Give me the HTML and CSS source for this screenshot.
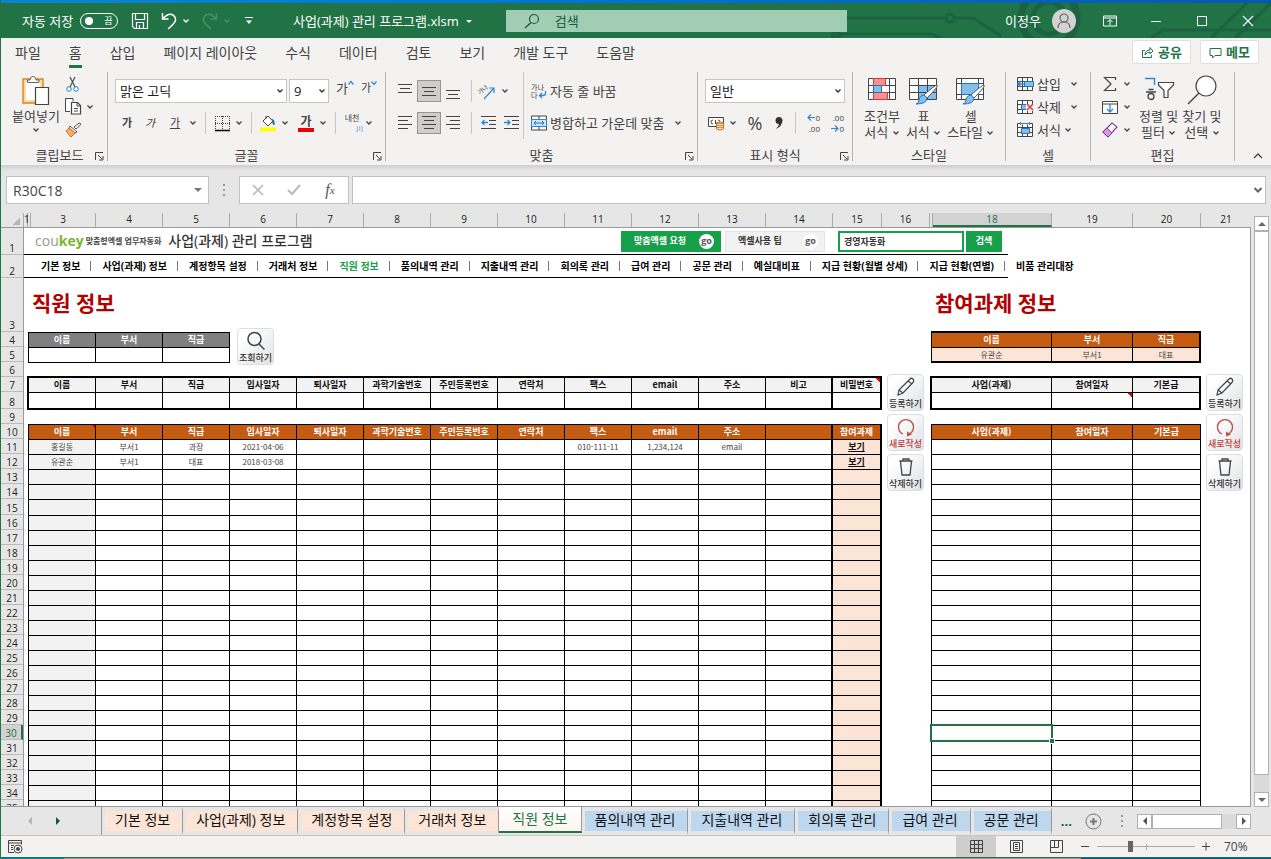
FILE: index.html
```html
<!DOCTYPE html>
<html lang="ko">
<head>
  <meta charset="UTF-8" />
  <meta name="viewport" content="width=device-width, initial-scale=1.0"/>
  <title>사업(과제) 관리 프로그램.xlsm</title>
  <link rel="stylesheet" href="styles.css">
</head>
<body>
  <!-- Shared icons -->
  <svg class="sprite" aria-hidden="true">
    <symbol id="chev" viewBox="0 0 8 8"><path d="M1.500 2.500 4 5l2.500-2.500" fill="none" stroke="currentColor" stroke-width="1.300"/></symbol>
    <symbol id="launcher" viewBox="0 0 9 9"><path d="M.5 8V.5H8M3 3l4 4M8 4v4H4" fill="none" stroke="#444"/></symbol>
    <symbol id="pencil" viewBox="0 0 22 22"><path d="M4 14 15 3q1.500-1.500 3 0t0 3.500L8 17l-5 2zM4 14l4 3M13 5l4 3" fill="none" stroke="#444" stroke-width="1.200"/></symbol>
    <symbol id="reload" viewBox="0 0 22 22"><path d="M8 18A7.500 7.500 0 1 1 14 18" fill="none" stroke="#c0504d" stroke-width="1.300"/><path d="M12 15.500v5l5-2z" fill="#c0504d"/></symbol>
    <symbol id="trash" viewBox="0 0 22 22"><path d="M4.500 5h13M8 5V3h6v2M5.500 5.500 7 19h8l1.500-13.500" fill="none" stroke="#444" stroke-width="1.300"/></symbol>
    <symbol id="brush" viewBox="0 0 24 22"><path d="M22 1q2 1-10 13l-3-3Q20 1 22 1z" fill="#fff" stroke="#555"/><path d="M9 11l3 3q0 6-11 6 3-1 3-4 0-4 5-5z" fill="#83beec" stroke="#2472b8"/></symbol>
    <symbol id="minitable" viewBox="0 0 17 16"><path d="M.5 1.500h15v13H.5zM.5 5.500h15M.5 10.500h15M5.500 1.500v13M10.500 1.500v13" fill="#fff" stroke="#444"/></symbol>
  </svg>

  <div class="window">
    <div class="desktop-strip"></div>

    <header class="titlebar">
      <svg class="circuit" viewBox="0 0 440 35" aria-hidden="true">
        <g fill="none" stroke="#1c6240" stroke-width="3">
          <path d="M0 15h114M124 15h18l28 18M0 35 10 31h90l10 4M320 35l12-8h108M380 35l36-35M404 35l36-35"/>
          <circle cx="119" cy="15" r="4"/><circle cx="218" cy="15" r="28" stroke-width="7"/><circle cx="218" cy="15" r="16" stroke-width="5"/><circle cx="5" cy="33" r="4"/>
        </g>
      </svg>
      <div class="quick">
        <span>자동 저장</span>
        <button class="toggle" aria-label="자동 저장"><i></i><span>끔</span></button>
        <button aria-label="저장"><svg width="18" height="18" viewBox="0 0 18 18"><path d="M1.500 1.500h15v15h-13l-2-2zM4.500 1.500v6h9v-6M5.500 16.500v-6h7v6M8.500 13v3" fill="none" stroke="#fff" stroke-width="1.200"/></svg></button>
        <button class="undo" aria-label="실행 취소"><svg width="16" height="18" viewBox="0 0 16 18"><path d="M1.500 1v6h6M1.500 7Q7 1 11 2.500q4 2 3.500 6Q14 11 7 17" fill="none" stroke="#fff" stroke-width="1.400"/></svg><svg width="8" height="8"><use href="#chev"/></svg></button>
        <button class="undo dim" aria-label="다시 실행"><svg width="16" height="18" viewBox="0 0 16 18"><path d="M14.500 1v6h-6M14.500 7Q9 1 5 2.500q-4 2-3.500 6Q2 11 9 17" fill="none" stroke="#4a8f6a" stroke-width="1.400"/></svg><svg width="8" height="8"><use href="#chev"/></svg></button>
        <button class="more" aria-label="빠른 실행 도구 모음"><svg width="8" height="8" viewBox="0 0 8 8"><path d="M0 .5h8" stroke="#fff"/><path d="M1 3.500h6L4 7z" fill="#fff"/></svg></button>
      </div>
      <button class="filename">사업(과제) 관리 프로그램.xlsm <svg width="8" height="8" viewBox="0 0 8 8"><path d="M1 3h6L4 6z" fill="#fff"/></svg></button>
      <label class="search">
        <svg width="16" height="16" viewBox="0 0 16 16"><circle cx="10" cy="6" r="4.500" fill="none" stroke="#185c37" stroke-width="1.200"/><path d="M7 9.500 1 15" stroke="#185c37" stroke-width="1.300"/></svg>
        <input type="search" placeholder="검색" aria-label="검색">
      </label>
      <div class="account">
        <span>이정우</span>
        <svg width="24" height="24" viewBox="0 0 24 24"><circle cx="12" cy="12" r="12" fill="#d2d2d2"/><circle cx="12" cy="9" r="4" fill="none" stroke="#666" stroke-width="1.200"/><path d="M6 19q0-6 6-6t6 6" fill="none" stroke="#666" stroke-width="1.200"/></svg>
      </div>
      <div class="controls">
        <button aria-label="리본 메뉴 표시 옵션"><svg width="14" height="12" viewBox="0 0 14 12"><path d="M.5 1h13v10H.5zM.5 3h13M7 10V5M4.500 7 7 4.500 9.500 7" fill="none" stroke="#fff"/></svg></button>
        <button aria-label="최소화"><svg width="12" height="12" viewBox="0 0 12 12"><path d="M1 6.500h10" stroke="#fff"/></svg></button>
        <button aria-label="최대화"><svg width="12" height="12" viewBox="0 0 12 12"><path d="M1.500 1.500h9v9h-9z" fill="none" stroke="#fff"/></svg></button>
        <button aria-label="닫기"><svg width="12" height="12" viewBox="0 0 12 12"><path d="m1 1 10 10M11 1 1 11" stroke="#fff" stroke-width="1.100"/></svg></button>
      </div>
    </header>

    <nav class="ribbon-tabs">
      <a href="#">파일</a>
      <a href="#" class="on">홈</a>
      <a href="#">삽입</a>
      <a href="#">페이지 레이아웃</a>
      <a href="#">수식</a>
      <a href="#">데이터</a>
      <a href="#">검토</a>
      <a href="#">보기</a>
      <a href="#">개발 도구</a>
      <a href="#">도움말</a>
      <div class="share">
        <button><svg width="13" height="13" viewBox="0 0 13 13"><path d="M4 4.500H1.500v7h9V9M4 9q0-5 5-5V1.500L12 5 9 8V6Q6 6 4 9z" fill="none" stroke="#217346"/></svg>공유</button>
        <button><svg width="13" height="13" viewBox="0 0 13 13"><path d="M1 2.500h11v7H6l-2.500 2.500V9.500H1z" fill="none" stroke="#217346"/></svg>메모</button>
      </div>
    </nav>

    <div class="ribbon">
      <section class="group clipboard">
        <div class="group-body">
          <button class="big">
            <svg width="30" height="31" viewBox="0 0 30 31"><path d="M2 4h20v24H2z" fill="#fbdca4" stroke="#d98419" stroke-width="1.400"/><path d="M5 7h14v18H5z" fill="#fff"/><path d="M6.500 7.500V5H9q0-3.500 3-3.500T15 5h3v2.500z" fill="#fff" stroke="#666"/><path d="M14.500 12.500h13v17h-13z" fill="#fff" stroke="#444" stroke-width="1.200"/></svg>
            <span>붙여넣기</span>
            <svg class="drop" width="8" height="8"><use href="#chev"/></svg>
          </button>
          <div class="stack">
            <button aria-label="잘라내기"><svg width="16" height="16" viewBox="0 0 16 16"><path d="m5 1 5 10M10 1 5 11" stroke="#555" stroke-width="1.300"/><circle cx="4" cy="13" r="2.300" fill="none" stroke="#2b88d8"/><circle cx="11" cy="13" r="2.300" fill="none" stroke="#2b88d8"/></svg></button>
            <button aria-label="복사"><svg width="17" height="17" viewBox="0 0 17 17"><path d="M5 13.500H.5v-13H8v3" fill="#fff" stroke="#444"/><path d="M6.500 4.500h6l3 3v8.500h-9z" fill="#fff" stroke="#444" stroke-width="1.200"/><path d="M12 4.500V8h3.500M9 10.500h4M9 13h4" fill="none" stroke="#444"/></svg><svg width="8" height="8"><use href="#chev"/></svg></button>
            <button aria-label="서식 복사"><svg width="17" height="16" viewBox="0 0 17 16"><path d="m9 5 5-4q2 0 1.500 2L11 7z" fill="#fff" stroke="#555"/><path d="m5 4 7 6-2 1-6-5z" fill="#fff" stroke="#555"/><path d="m4 6 6 5-4 4-5-6z" fill="#f5b169" stroke="#d8690e"/></svg></button>
          </div>
        </div>
        <footer>클립보드<svg width="9" height="9"><use href="#launcher"/></svg></footer>
      </section>

      <section class="group font">
        <div class="group-body rows">
          <div class="tools">
            <select class="font-name" aria-label="글꼴"><option>맑은 고딕</option></select>
            <select class="font-size" aria-label="글꼴 크기"><option>9</option></select>
            <button class="icon grow">가<svg width="6" height="4" viewBox="0 0 6 4"><path d="m.5 3.500 2.500-3 2.500 3" fill="none" stroke="#2b88d8" stroke-width="1.200"/></svg></button>
            <button class="icon grow less">가<svg width="6" height="4" viewBox="0 0 6 4"><path d="m.5.500 2.500 3 2.500-3" fill="none" stroke="#2b88d8" stroke-width="1.200"/></svg></button>
          </div>
          <div class="tools small">
            <button class="icon"><b>가</b></button>
            <button class="icon"><em>가</em></button>
            <button class="icon"><u>가</u></button>
            <button class="arrow" aria-label="밑줄"><svg width="8" height="8"><use href="#chev"/></svg></button>
            <i class="sep"></i>
            <button class="icon mid" aria-label="테두리"><svg width="15" height="15" viewBox="0 0 15 15"><path d="M0 .5h15M0 7.500h15M.5 0v15M7.500 0v15M14.500 0v15" stroke="#444" stroke-dasharray="1 1"/><path d="M0 14.500h15" stroke="#000" stroke-width="1.500"/></svg></button>
            <button class="arrow" aria-label="테두리 목록"><svg width="8" height="8"><use href="#chev"/></svg></button>
            <i class="sep"></i>
            <button class="icon mid" aria-label="채우기 색"><svg width="17" height="17" viewBox="0 0 17 17"><path d="m3 6 5-5 5 5-5 5zM6 4V1" fill="#fff" stroke="#444"/><path d="M12 4q3 1 2 6-2-2-2-6z" fill="#2472b8" stroke="#2472b8"/><path d="M0 12.500h16v4H0z" fill="#ff0"/></svg></button>
            <button class="arrow" aria-label="채우기 목록"><svg width="8" height="8"><use href="#chev"/></svg></button>
            <button class="icon mid color"><b>가</b></button>
            <button class="arrow" aria-label="글꼴 색 목록"><svg width="8" height="8"><use href="#chev"/></svg></button>
            <i class="sep"></i>
            <button class="icon mid ruby">내천<span>川</span></button>
            <button class="arrow" aria-label="윗주"><svg width="8" height="8"><use href="#chev"/></svg></button>
          </div>
        </div>
        <footer>글꼴<svg width="9" height="9"><use href="#launcher"/></svg></footer>
      </section>

      <section class="group align">
        <div class="group-body">
          <div class="rows align-left">
            <div class="tools">
              <button class="icon" aria-label="위쪽"><svg width="14" height="16" viewBox="0 0 14 16"><path d="M0 1.500h14M2 5.500h10M0 9.500h14" stroke="#444"/></svg></button>
              <button class="icon on" aria-label="가운데"><svg width="14" height="16" viewBox="0 0 14 16"><path d="M0 4.500h14M2 8.500h10M0 12.500h14" stroke="#444"/></svg></button>
              <button class="icon" aria-label="아래쪽"><svg width="14" height="16" viewBox="0 0 14 16"><path d="M0 7.500h14M2 11.500h10M0 15.500h14" stroke="#444"/></svg></button>
              <i class="sep"></i>
              <button class="icon mid" aria-label="방향"><svg width="20" height="20" viewBox="0 0 20 20"><text x="1" y="12" font-size="6" transform="rotate(-38 4 12)" fill="#444">가나</text><path d="M6 18 16 7M11 7h5v5" fill="none" stroke="#2b88d8" stroke-width="1.200"/></svg></button>
              <button class="arrow" aria-label="방향 목록"><svg width="8" height="8"><use href="#chev"/></svg></button>
            </div>
            <div class="tools">
              <button class="icon" aria-label="왼쪽 맞춤"><svg width="14" height="14" viewBox="0 0 14 14"><path d="M0 .5h14M0 4.500h10M0 8.500h14M0 12.500h10" stroke="#444"/></svg></button>
              <button class="icon on" aria-label="가운데 맞춤"><svg width="14" height="14" viewBox="0 0 14 14"><path d="M0 .5h14M2 4.500h10M0 8.500h14M2 12.500h10" stroke="#444"/></svg></button>
              <button class="icon" aria-label="오른쪽 맞춤"><svg width="14" height="14" viewBox="0 0 14 14"><path d="M0 .5h14M4 4.500h10M0 8.500h14M4 12.500h10" stroke="#444"/></svg></button>
              <i class="sep"></i>
              <button class="icon mid" aria-label="내어쓰기"><svg width="15" height="14" viewBox="0 0 15 14"><path d="M0 .5h15M8 4.500h7M8 8.500h7M0 12.500h15" stroke="#444"/><path d="M7 6.500H1M3.500 4 1 6.500 3.500 9" fill="none" stroke="#2b88d8" stroke-width="1.300"/></svg></button>
              <button class="icon" aria-label="들여쓰기"><svg width="15" height="14" viewBox="0 0 15 14"><path d="M0 .5h15M8 4.500h7M8 8.500h7M0 12.500h15" stroke="#444"/><path d="M0 6.500h6M3.500 4 6 6.500 3.500 9" fill="none" stroke="#2b88d8" stroke-width="1.300"/></svg></button>
            </div>
          </div>
          <div class="rows align-right">
            <div class="tools">
              <button class="text"><svg width="16" height="16" viewBox="0 0 16 16"><text x="0" y="7" font-size="7" fill="#444">가나</text><text x="0" y="15" font-size="7" fill="#444">다</text><path d="M14.500 8v2.500q0 2-2.500 2H8.500M11 10l-2.500 2.500L11 15" fill="none" stroke="#2b88d8" stroke-width="1.300"/></svg>자동 줄 바꿈</button>
            </div>
            <div class="tools">
              <button class="text"><svg width="16" height="16" viewBox="0 0 16 16"><path d="M.5 1h15v14H.5zM8 1v14" fill="#fff" stroke="#444"/><path d="M.5 4.500h15v7H.5z" fill="#cfe6f8" stroke="#2b88d8"/><path d="M3 8h10M5 6 3 8l2 2M11 6l2 2-2 2" fill="none" stroke="#2472b8"/></svg>병합하고 가운데 맞춤</button>
              <button class="arrow last" aria-label="병합 목록"><svg width="8" height="8"><use href="#chev"/></svg></button>
            </div>
          </div>
        </div>
        <footer>맞춤<svg width="9" height="9"><use href="#launcher"/></svg></footer>
      </section>

      <section class="group number">
        <div class="group-body rows">
          <div class="tools"><select aria-label="표시 형식"><option>일반</option></select></div>
          <div class="tools">
            <button class="icon mid" aria-label="회계 표시 형식"><svg width="17" height="16" viewBox="0 0 17 16"><path d="M.5 2.500h15v9H.5z" fill="#fff" stroke="#444"/><path d="M5 5q-2 0-2 2t2 2M7.500 5v4M10 5q2 0 2 2" fill="none" stroke="#444"/><path d="M8.500 8q3.500-2 7 0v6q-3.500 2-7 0z" fill="#fff" stroke="#d8690e"/><path d="M8.500 8q3.500 2 7 0M8.500 10q3.500 2 7 0M8.500 12q3.500 2 7 0" fill="none" stroke="#d8690e"/></svg></button>
            <button class="arrow" aria-label="회계 목록"><svg width="8" height="8"><use href="#chev"/></svg></button>
            <button class="icon percent">%</button>
            <button class="icon" aria-label="쉼표 스타일"><svg width="10" height="14" viewBox="0 0 10 14"><path d="M5 1a3.500 3.500 0 0 1 3.500 4Q8 10 2 13q3-3 3-5a3.500 3.500 0 0 1 0-7z" fill="#333"/></svg></button>
            <i class="sep"></i>
            <button class="icon dec"><span><svg width="8" height="7" viewBox="0 0 8 7"><path d="M8 3.500H1M4 .5l-3 3 3 3" fill="none" stroke="#2b88d8" stroke-width="1.200"/></svg>0</span><span>.00</span></button>
            <button class="icon dec"><span>.00</span><span><svg width="8" height="7" viewBox="0 0 8 7"><path d="M0 3.500h7M4 .5l3 3-3 3" fill="none" stroke="#2b88d8" stroke-width="1.200"/></svg>0</span></button>
          </div>
        </div>
        <footer>표시 형식<svg width="9" height="9"><use href="#launcher"/></svg></footer>
      </section>

      <section class="group styles">
        <div class="group-body">
          <button class="big">
            <svg width="30" height="31" viewBox="0 0 30 31"><path d="M1.500 3.500h27v21h-27zM6.500 3.500v21M14.500 3.500v21M22.500 3.500v21M1.500 10.500h27M1.500 17.500h27" fill="#fff" stroke="#444"/><path d="M6.500 3.500h12v7h-12zM6.500 17.500h14v7h-14z" fill="#ff8f8f" stroke="#e0373f"/><path d="M6.500 10.500h8v7h-8z" fill="#83beec" stroke="#2472b8"/></svg>
            <span>조건부<br>서식 <svg width="8" height="8"><use href="#chev"/></svg></span>
          </button>
          <button class="big">
            <svg width="31" height="31" viewBox="0 0 31 31"><path d="M1.500 3.500h27v21h-27z" fill="#fff"/><path d="M10.500 10.500h18v14h-18z" fill="#83beec"/><path d="M1.500 3.500h27v21h-27zM10.500 3.500v21M19.500 3.500v21M1.500 10.500h27M1.500 17.500h27" fill="none" stroke="#444"/><use href="#brush" x="7" y="9" width="24" height="22"/></svg>
            <span>표<br>서식 <svg width="8" height="8"><use href="#chev"/></svg></span>
          </button>
          <button class="big">
            <svg width="31" height="31" viewBox="0 0 31 31"><path d="M1.500 3.500h27v21h-27zM6.500 3.500v21M23.500 3.500v21M1.500 8.500h27M1.500 19.500h27" fill="#fff" stroke="#444"/><path d="M6.500 8.500h17v11h-17z" fill="#83beec" stroke="#2472b8"/><use href="#brush" x="7" y="9" width="24" height="22"/></svg>
            <span>셀<br>스타일 <svg width="8" height="8"><use href="#chev"/></svg></span>
          </button>
        </div>
        <footer>스타일</footer>
      </section>

      <section class="group cells">
        <div class="group-body thirds">
          <button class="text"><svg width="17" height="16" viewBox="0 0 17 16"><use href="#minitable"/><path d="M7.500 5.500h9v5h-9z" fill="#83beec" stroke="#2472b8"/><path d="M8 8H1M4 5 1 8l3 3" fill="none" stroke="#2b88d8" stroke-width="1.500"/></svg>삽입<svg class="far" width="8" height="8"><use href="#chev"/></svg></button>
          <button class="text"><svg width="17" height="16" viewBox="0 0 17 16"><use href="#minitable"/><path d="M4.500 5.500h6v5h-6z" fill="#83beec" stroke="#2472b8"/><path d="M9 5h8v7H9z" fill="#f3f2f1"/><path d="m10 5 6 6M16 5l-6 6" stroke="#e0373f" stroke-width="1.500"/></svg>삭제<svg class="far" width="8" height="8"><use href="#chev"/></svg></button>
          <button class="text"><svg width="17" height="16" viewBox="0 0 17 16"><use href="#minitable"/><path d="M4.500 6.500h8v5h-8z" fill="#83beec" stroke="#2472b8"/><path d="M4 0h9v2.500H4z" fill="#f3f2f1"/><path d="M3.500 0v3M12.500 0v3M3.500 1.500h9" stroke="#2b88d8"/></svg>서식<svg width="8" height="8"><use href="#chev"/></svg></button>
        </div>
        <footer>셀</footer>
      </section>

      <section class="group edit">
        <div class="group-body">
          <div class="thirds">
            <button class="text" aria-label="합계"><svg width="16" height="16" viewBox="0 0 16 16"><path d="M13.500 4V1.500h-11L9 8l-6.500 6.500h11V12" fill="none" stroke="#444" stroke-width="1.200"/></svg><svg width="8" height="8"><use href="#chev"/></svg></button>
            <button class="text" aria-label="채우기"><svg width="16" height="16" viewBox="0 0 16 16"><path d="M.5 2.500h15v12H.5zM.5 5h15" fill="#fff" stroke="#444"/><path d="M8 5v8M5 10l3 3 3-3" fill="none" stroke="#2b88d8" stroke-width="1.300"/></svg><svg width="8" height="8"><use href="#chev"/></svg></button>
            <button class="text" aria-label="지우기"><svg width="16" height="16" viewBox="0 0 16 16"><path d="m1 10 9-9 5 4-9 10z" fill="#fff" stroke="#8e3a9d" stroke-width="1.200"/><path d="m1 10 4-4 5 5-4 4z" fill="#d79be0" stroke="#8e3a9d"/></svg><svg width="8" height="8"><use href="#chev"/></svg></button>
          </div>
          <button class="big">
            <svg width="30" height="31" viewBox="0 0 30 31"><path d="M1 3.500h9.500V10" fill="none" stroke="#2b88d8" stroke-width="1.400"/><path d="M4.500 14.500h5M2 17h10" stroke="#444" stroke-width="1.300"/><circle cx="7" cy="21.500" r="3" fill="none" stroke="#444" stroke-width="1.300"/><path d="M14.500 7.500h15V10L24 15.500v7h-4v-7L14.500 10z" fill="#fff" stroke="#444" stroke-width="1.200"/></svg>
            <span>정렬 및<br>필터 <svg width="8" height="8"><use href="#chev"/></svg></span>
          </button>
          <button class="big">
            <svg width="30" height="31" viewBox="0 0 30 31"><circle cx="19" cy="11" r="10" fill="#fff" stroke="#444" stroke-width="1.200"/><path d="M12 18 1 29" stroke="#444" stroke-width="1.400"/></svg>
            <span>찾기 및<br>선택 <svg width="8" height="8"><use href="#chev"/></svg></span>
          </button>
        </div>
        <footer>편집</footer>
      </section>
      <button class="collapse" aria-label="리본 메뉴 축소"><svg width="10" height="6" viewBox="0 0 10 6"><path d="m1 5 4-4 4 4" fill="none" stroke="#444" stroke-width="1.300"/></svg></button>
    </div>

    <div class="formula-bar">
      <input class="name-box" value="R30C18" aria-label="이름 상자">
      <span class="dots"></span>
      <div class="fx">
        <button aria-label="취소"><svg width="12" height="12" viewBox="0 0 12 12"><path d="m1 1 10 10M11 1 1 11" stroke="#bbb" stroke-width="1.700"/></svg></button>
        <button aria-label="입력"><svg width="14" height="12" viewBox="0 0 14 12"><path d="m1 6 4 4 8-9" fill="none" stroke="#bbb" stroke-width="2.200"/></svg></button>
        <button class="fn"><i>f</i><sub>x</sub></button>
      </div>
      <input class="formula" aria-label="수식 입력줄">
    </div>

    <div class="sheet-area">
      <div class="sheet">
        <div class="col-heads" id="col-heads"></div>
        <div class="sheet-body">
          <div class="row-heads" id="row-heads"></div>
          <main class="canvas">
            <div class="brand">
              <span class="logo">cou<b>key</b></span>
              <span class="slogan">맞춤형엑셀 업무자동화</span>
              <strong>사업(과제) 관리 프로그램</strong>
              <div class="brand-tools">
                <a href="#" class="go green">맞춤엑셀 요청<i>go</i></a>
                <a href="#" class="go">엑셀사용 팁<i>go</i></a>
                <input value="경영자동화" aria-label="엑셀 검색">
                <button>검색</button>
              </div>
            </div>
            <nav class="menu">
              <a href="#">기본 정보</a>
              <a href="#">사업(과제) 정보</a>
              <a href="#">계정항목 설정</a>
              <a href="#">거래처 정보</a>
              <a href="#" class="on">직원 정보</a>
              <a href="#">품의내역 관리</a>
              <a href="#">지출내역 관리</a>
              <a href="#">회의록 관리</a>
              <a href="#">급여 관리</a>
              <a href="#">공문 관리</a>
              <a href="#">예실대비표</a>
              <a href="#">지급 현황(월별 상세)</a>
              <a href="#">지급 현황(연별)</a>
              <a href="#">비품 관리대장</a>
            </nav>

            <div class="panes">
              <section class="pane staff">
                <h1>직원 정보</h1>
                <div class="lookup">
                  <table class="cells-table gray">
                    <thead><tr><th>이름</th><th>부서</th><th>직급</th></tr></thead>
                    <tbody><tr><td></td><td></td><td></td></tr></tbody>
                  </table>
                  <button class="act"><svg width="22" height="22" viewBox="0 0 22 22"><circle cx="9.500" cy="9" r="6.500" fill="none" stroke="#444" stroke-width="1.500"/><path d="m14 14 5.500 5.500" stroke="#444" stroke-width="1.500"/></svg>조회하기</button>
                </div>
                <div class="work">
                  <div class="tables">
                    <table class="cells-table entry">
                      <thead><tr><th>이름</th><th>부서</th><th>직급</th><th>입사일자</th><th>퇴사일자</th><th>과학기술번호</th><th>주민등록번호</th><th>연락처</th><th>팩스</th><th>email</th><th>주소</th><th>비고</th><th class="narrow note">비밀번호</th></tr></thead>
                      <tbody><tr><td></td><td></td><td></td><td></td><td></td><td></td><td></td><td></td><td></td><td></td><td></td><td></td><td></td></tr></tbody>
                    </table>
                    <table class="cells-table list">
                      <thead><tr><th class="note">이름</th><th>부서</th><th>직급</th><th>입사일자</th><th>퇴사일자</th><th>과학기술번호</th><th>주민등록번호</th><th>연락처</th><th>팩스</th><th>email</th><th>주소</th><th></th><th class="narrow">참여과제</th></tr></thead>
                      <tbody id="staff-rows"></tbody>
                    </table>
                  </div>
                  <div class="actions">
                    <button class="act"><svg width="22" height="22"><use href="#pencil"/></svg>등록하기</button>
                    <button class="act red"><svg width="22" height="22"><use href="#reload"/></svg>새로작성</button>
                    <button class="act"><svg width="22" height="22"><use href="#trash"/></svg>삭제하기</button>
                  </div>
                </div>
              </section>

              <section class="pane project">
                <h1>참여과제 정보</h1>
                <div class="lookup">
                  <table class="cells-table orange">
                    <thead><tr><th class="c18">이름</th><th class="c19">부서</th><th>직급</th></tr></thead>
                    <tbody><tr><td>유관순</td><td>부서1</td><td>대표</td></tr></tbody>
                  </table>
                </div>
                <div class="work">
                  <div class="tables">
                    <table class="cells-table entry">
                      <thead><tr><th class="c18">사업(과제)</th><th class="c19">참여일자</th><th>기본급</th></tr></thead>
                      <tbody><tr><td></td><td class="note"></td><td></td></tr></tbody>
                    </table>
                    <table class="cells-table list">
                      <thead><tr><th class="c18">사업(과제)</th><th class="c19">참여일자</th><th>기본급</th></tr></thead>
                      <tbody id="project-rows"></tbody>
                    </table>
                  </div>
                  <div class="actions">
                    <button class="act"><svg width="22" height="22"><use href="#pencil"/></svg>등록하기</button>
                    <button class="act red"><svg width="22" height="22"><use href="#reload"/></svg>새로작성</button>
                    <button class="act"><svg width="22" height="22"><use href="#trash"/></svg>삭제하기</button>
                  </div>
                </div>
              </section>
            </div>
          </main>
        </div>
      </div>
      <div class="vscroll">
        <button aria-label="위로"><svg width="8" height="8" viewBox="0 0 8 8"><path d="M0 6h8L4 2z" fill="#666"/></svg></button>
        <i></i>
        <button aria-label="아래로"><svg width="8" height="8" viewBox="0 0 8 8"><path d="M0 2h8L4 6z" fill="#666"/></svg></button>
      </div>
    </div>

    <div class="sheet-tabs">
      <div class="tab-nav">
        <button aria-label="이전 시트"><svg width="6" height="8" viewBox="0 0 6 8"><path d="M5 0v8L1 4z" fill="#b5b5b5"/></svg></button>
        <button aria-label="다음 시트"><svg width="6" height="8" viewBox="0 0 6 8"><path d="M1 0v8l4-4z" fill="#0e5c2f"/></svg></button>
      </div>
      <div class="tabs">
        <button>기본 정보</button>
        <button>사업(과제) 정보</button>
        <button>계정항목 설정</button>
        <button>거래처 정보</button>
        <button class="on">직원 정보</button>
        <button class="blue">품의내역 관리</button>
        <button class="blue">지출내역 관리</button>
        <button class="blue">회의록 관리</button>
        <button class="blue">급여 관리</button>
        <button class="blue">공문 관리</button>
      </div>
      <button class="ellipsis">...</button>
      <button class="add" aria-label="새 시트"><svg width="17" height="17" viewBox="0 0 17 17"><circle cx="8.500" cy="8.500" r="7.500" fill="none" stroke="#777"/><path d="M8.500 5v7M5 8.500h7" stroke="#777" stroke-width="2"/></svg></button>
      <span class="dots"></span>
      <div class="hscroll">
        <button aria-label="왼쪽"><svg width="8" height="8" viewBox="0 0 8 8"><path d="M6 0v8L2 4z" fill="#555"/></svg></button>
        <i></i>
        <button aria-label="오른쪽"><svg width="8" height="8" viewBox="0 0 8 8"><path d="M2 0v8l4-4z" fill="#555"/></svg></button>
      </div>
    </div>

    <footer class="status">
      <button class="macro" aria-label="매크로 기록"><svg width="15" height="14" viewBox="0 0 15 14"><path d="M6 12.500H.5V.5h13v4M.5 3h13M3 5.500h3M3 7.500h2M3 9.500h2" fill="none" stroke="#444"/><circle cx="10" cy="9" r="4" fill="#fff" stroke="#444"/><circle cx="10" cy="9" r="2" fill="#444"/></svg></button>
      <button class="view on" aria-label="기본"><svg width="13" height="13" viewBox="0 0 13 13"><path d="M.5.500h12v12H.5zM4.500 0v13M8.500 0v13M0 4.500h13M0 8.500h13" fill="none" stroke="#444"/></svg></button>
      <button class="view" aria-label="페이지 레이아웃"><svg width="13" height="13" viewBox="0 0 13 13"><path d="M.5.500h12v12H.5zM3.500 2.500h6v8h-6zM5 4.500h3M5 6.500h3M5 8.500h3" fill="none" stroke="#444"/></svg></button>
      <button class="view" aria-label="페이지 나누기"><svg width="13" height="13" viewBox="0 0 13 13"><path d="M.5.500h12v12H.5zM4.500 0v7.500M8.500 0v7.500M.5 7.500h8" fill="none" stroke="#444"/></svg></button>
      <div class="zoom">
        <button aria-label="축소"><svg width="9" height="9" viewBox="0 0 9 9"><path d="M0 4.500h8" stroke="#444"/></svg></button>
        <input type="range" min="0" max="100" value="33" aria-label="확대/축소">
        <button aria-label="확대"><svg width="9" height="9" viewBox="0 0 9 9"><path d="M0 4.500h8M4 .5v8" stroke="#444"/></svg></button>
        <span>70%</span>
      </div>
    </footer>
    <div class="desktop-bottom"></div>
  </div>
  <script src="script.js"></script>
</body>
</html>
```

FILE: styles.css
```css
:root {
  --green:#217346;
  --ribbon:#f3f2f1;
  --frame:#e6e6e6;
  --line:#ababab;
  --orange:#c55a11;
  --peach:#fce4d6;
  --text:#444;
  font-family:"Open Sans","Noto Sans CJK KR",sans-serif;
}
*{box-sizing:border-box;}
body {
  margin:0;
  height:100vh;
  overflow:hidden;
  font-size:13px;
  line-height:16px;
  color:var(--text);
  background:var(--frame);
}
button,input,select {font:inherit;color:inherit;margin:0;border-radius:0;}
button {
  display:flex;
  align-items:center;
  justify-content:center;
  padding:0;
  border:none;
  background:none;
  white-space:nowrap;
}
a {color:inherit;text-decoration:none;white-space:nowrap;}
svg {flex:none;overflow:visible;}
.sprite {display:none;}
.window {
  display:flex;
  flex-direction:column;
  height:100vh;
  border-left:1px solid var(--green);
}
.desktop-strip {height:3px;flex:none;background:linear-gradient(90deg,#0a84d0,#0078d7 40%,#0558b0);}
.desktop-bottom {height:2px;flex:none;border-top:1px solid var(--green);background:linear-gradient(90deg,#0a7f9c 5%,#999 5%,#999 85%,#05508c 85%);}

/* Title bar */
.titlebar {
  position:relative;
  display:flex;
  align-items:center;
  flex:none;
  height:35px;
  padding-left:21px;
  background:var(--green);
  color:#fff;
}
.circuit {position:absolute;right:0;top:0;width:440px;height:35px;overflow:hidden;}
.titlebar > *:not(.circuit) {position:relative;}
.quick {display:flex;align-items:center;width:271px;}
.toggle {width:38px;height:16px;margin:0 13px 0 7px;border:1px solid #fff;border-radius:8px;justify-content:flex-start;gap:11px;padding-left:4px;font-size:9px;}
.toggle i {width:8px;height:8px;border-radius:50%;background:#fff;}
.undo {gap:5px;margin-left:12px;}
.undo.dim {color:#4a8f6a;}
.more {margin-left:14px;}
.filename {gap:6px;}
.search {
  display:flex;
  align-items:center;
  gap:15px;
  flex:0 1 341px;
  height:22px;
  margin-left:33px;
  padding-left:18px;
  background:#a0cdb4;
  color:#185c37;
}
.search input {flex:1;min-width:0;border:none;background:none;outline:none;padding:0;}
.search input::placeholder {color:#185c37;opacity:1;}
.account {display:flex;align-items:center;gap:11px;margin-left:auto;}
.controls {display:flex;margin-left:11px;}
.controls button {width:46px;height:35px;}

/* Ribbon tabs */
.ribbon-tabs {
  display:flex;
  align-items:center;
  gap:28px;
  flex:none;
  height:32px;
  padding:0 12px 0 14px;
  background:var(--ribbon);
  font-size:14px;
}
.ribbon-tabs a {height:28px;line-height:26px;border-bottom:3px solid transparent;}
.ribbon-tabs a.on {border-bottom-color:var(--green);}
.share {display:flex;gap:9px;margin-left:auto;}
.share button {width:59px;height:24px;gap:4px;background:#fff;border:1px solid #e1dfdd;border-radius:2px;color:var(--green);font-size:13px;font-weight:700;margin-bottom:4px;}

/* Ribbon */
.ribbon {display:flex;flex:none;height:95px;padding:2px 0 4px;background:var(--ribbon);}
.group {display:flex;flex-direction:column;flex:none;border-right:1px solid #b5b3b1;}
.group-body {display:flex;flex:1;}
.group > footer {position:relative;line-height:12px;text-align:center;}
.group > footer svg {position:absolute;right:3px;bottom:0;}
.clipboard {width:107px;padding-left:11px;}
.font {width:278px;}
.align {width:312px;}
.number {width:155px;}
.styles {width:153px;}
.cells {width:85px;}
.edit {width:144px;}
.rows {display:flex;flex-direction:column;padding:3px 0 0 7px;}
.tools {display:flex;align-items:center;height:32px;}
.icon {width:24px;height:22px;}
.icon.mid {width:22px;}
.icon.on {background:#d0cecc;border:1px solid #979593;}
.arrow {width:12px;height:22px;}
.arrow.last {margin-left:8px;}
.sep {width:12px;height:22px;background:linear-gradient(#c8c6c4,#c8c6c4) center/1px 100% no-repeat;}
.text {gap:3px;}
.big {flex-direction:column;justify-content:flex-start;line-height:16px;padding-top:3px;}
.big > span {margin-top:2px;}
.big > .drop {margin-top:2px;}
.stack {display:flex;flex-direction:column;padding-left:5px;}
.stack button {height:23px;gap:4px;justify-content:flex-start;}
.thirds {display:flex;flex-direction:column;}
.thirds button {height:23px;justify-content:flex-start;}
.thirds .far {margin-left:6px;}
.cells .thirds {padding-left:11px;}
.edit .thirds {padding-left:11px;margin-right:8px;}
.edit .thirds button {gap:5px;}
.edit .big + .big {margin-left:4px;}
.styles .group-body {padding-left:11px;gap:6px;}
.tools select {height:24px;}
select {
  appearance:none;
  padding:0 4px;
  border:1px solid #c8c6c4;
  background:#fff url("data:image/svg+xml,%3Csvg xmlns='http://www.w3.org/2000/svg' width='8' height='8'%3E%3Cpath d='M1.500 2.500 4 5l2.500-2.500' fill='none' stroke='%23333' stroke-width='1.400'/%3E%3C/svg%3E") right 2px center no-repeat;
  color:#222;
}
.font-name {width:172px;}
.font-size {width:40px;margin:0 4px 0 2px;}
.number select {width:140px;}
.grow {align-items:flex-start;font-size:13px;}
.grow.less {font-size:11px;}
.grow svg {margin-top:1px;}
.small {font-size:11px;}
.small em {transform:skewX(-14deg);font-style:normal;}
.color {flex-direction:column;margin-left:4px;font-size:12px;line-height:13px;}
.color::after {content:"";width:16px;height:4px;background:#e00;}
.ruby {flex-direction:column;font-size:8px;line-height:8px;}
.ruby span {align-self:flex-end;margin-top:3px;color:#2b88d8;font-size:7px;}
.align-left {width:138px;border-right:1px solid #c8c6c4;margin-bottom:10px;}
.percent {margin-left:4px;font-size:18px;}
.number .sep {width:8px;}
.dec {flex-direction:column;gap:1px;font-size:8px;line-height:10px;align-items:flex-end;padding-right:3px;}
.dec span {display:flex;align-items:center;}
.collapse {margin:auto 8px 2px auto;}

/* Formula bar */
.formula-bar {
  display:flex;
  align-items:center;
  flex:none;
  height:48px;
  padding:2px 5px 0;
  background:linear-gradient(#cfcfcf,var(--frame) 6px);
}
.formula-bar input,.fx {height:28px;border:1px solid #c0c0c0;background:#fff;outline:none;}
.formula-bar .name-box {width:203px;padding:0 6px;font-size:14px;background:#fff url("data:image/svg+xml,%3Csvg xmlns='http://www.w3.org/2000/svg' width='8' height='8'%3E%3Cpath d='M0 2h8L4 6z' fill='%23777'/%3E%3C/svg%3E") right 6px center no-repeat;}
.dots {width:2px;height:12px;margin:0 14px;background:repeating-linear-gradient(#999 0 2px,transparent 2px 5px);}
.fx {display:flex;width:110px;margin:0 3px 0 0;}
.fx button {flex:1;}
.fn {font-family:"Liberation Serif",serif;font-size:16px;color:#555;}
.fn sub {font-size:11px;font-style:italic;line-height:1;}
.formula-bar .formula {flex:1;min-width:0;padding:0 20px 0 6px;background:#fff url("data:image/svg+xml,%3Csvg xmlns='http://www.w3.org/2000/svg' width='8' height='8'%3E%3Cpath d='M.5 2 4 5.500 7.500 2' fill='none' stroke='%23666' stroke-width='2'/%3E%3C/svg%3E") right 3px center no-repeat;}

/* Sheet */
.sheet-area {display:flex;flex:1;min-height:0;background:var(--frame);}
.sheet {display:flex;flex-direction:column;flex:1;min-width:0;border-bottom:1px solid #999;}
.col-heads {display:flex;flex:none;height:15px;font-size:10px;line-height:13px;color:#222;text-align:center;border-bottom:1px solid #999;}
.col-heads span {flex:none;border-right:1px solid var(--line);}
.col-heads span:last-child {flex:1;border-right:none;}
.col-heads .corner {background:linear-gradient(135deg,transparent 50%,#b5b5b5 50%) right 3px bottom 2px/7px 7px no-repeat;}
.col-heads .on {background:#d2d2d2;color:var(--green);border-bottom:2px solid var(--green);}
.sheet-body {display:flex;flex:1;min-height:0;overflow:hidden;}
.row-heads {flex:none;width:23px;border-right:1px solid #999;font-size:10px;line-height:11px;color:#222;}
.row-heads div {display:flex;align-items:flex-end;justify-content:center;border-bottom:1px solid #bbb;}
.row-heads .on {background:#d2d2d2;color:var(--green);border-right:2px solid var(--green);}
.canvas {flex:1;min-width:0;overflow:hidden;background:#fff;border-right:1px solid #999;}
.brand {display:flex;align-items:center;width:984px;height:27px;padding:0 6px 0 11px;border-bottom:1px solid #000;color:#333;}
.logo {font-size:14px;color:#999;}
.logo b {color:#76b82a;}
.slogan {font-size:8px;font-weight:700;color:#444;margin:0 7px 0 2px;}
.brand strong {font-size:14px;font-weight:500;}
.brand-tools {display:flex;align-items:center;margin-left:auto;font-size:9px;font-weight:700;}
.go {display:flex;align-items:center;justify-content:space-between;width:100px;height:21px;margin-right:4px;padding:0 6px 0 12px;background:#f2f2f2;border:1px solid #e4e4e4;}
.go i {width:15px;height:15px;line-height:13px;border-radius:50%;background:#fff;color:#555;font-style:normal;text-align:center;}
.go.green {background:#16a04a;border-color:#16a04a;color:#fff;}
.brand-tools input {width:126px;height:21px;margin:0 2px 0 9px;padding:0 4px;border:2px solid #16a04a;outline:none;}
.brand-tools button {width:36px;height:21px;background:#16a04a;color:#fff;}
.menu {display:flex;align-items:center;width:984px;height:23px;padding-left:6px;border-bottom:1px solid #000;font-size:10px;font-weight:700;color:#000;}
.menu a {flex:none;padding:0 10px 0 11px;line-height:10px;border-right:1px solid #777;}
.menu a:last-child {border-right:none;}
.menu .on {color:#16a04a;}

.panes {display:flex;}
.pane {flex:none;}
.staff {width:907px;padding-left:4px;}
h1 {margin:0;height:54px;padding:0 4px;font-size:21px;line-height:50px;font-weight:700;color:#b00000;}
.lookup {display:flex;align-items:flex-start;gap:7px;height:42px;}
.lookup .act {margin-top:-4px;}
.work {display:flex;gap:5px;}
.tables {display:flex;flex-direction:column;gap:14px;padding-top:2px;}
.cells-table {
  table-layout:fixed;
  border-collapse:separate;
  border-spacing:0;
  width:202px;
  border:solid #000;
  border-width:1px 0 0 1px;
  font-family:"Noto Sans CJK KR",sans-serif;
  line-height:12px;
  text-align:center;
}
.cells-table th,.cells-table td {height:15px;padding:0;border:solid #000;border-width:0 1px 1px 0;white-space:nowrap;}
.cells-table th {font-size:9px;}
.cells-table td {font-size:8px;}
.work .cells-table {width:854px;}
.project .cells-table {width:270px;}
.narrow {width:49px;}
.c18 {width:120px;}
.c19 {width:81px;}
.gray th {background:#808080;color:#fff;}
.orange th,.list th {background:var(--orange);color:#fff;}
.orange td {background:var(--peach);}
.orange {border-top-width:2px;margin-top:-1px;}
.cells-table.entry {border-width:2px 0 0 2px;margin-left:-1px;color:#111;}
.entry td,.orange tbody td {border-bottom-width:2px;}
.entry td {height:17px;}
.entry tr > :last-child,.orange tr > :last-child,.staff .list tr > :last-child {border-right-width:2px;}
.entry th {background:#f2f2f2;}
.staff .entry {width:855px;}
.project .entry {width:271px;}
.staff .work tr > :nth-child(12) {border-right-width:2px;}
.staff .list td:first-child {background:#f2f2f2;}
.staff .list td:last-child {background:var(--peach);}
.list td a {font-size:9px;font-weight:700;text-decoration:underline;color:#111;}
.note {position:relative;}
.note::after {content:"";position:absolute;right:0;top:0;width:4px;height:4px;background:linear-gradient(to top right,transparent 50%,#e00 50%);}
.selected {position:relative;}
.selected::before {content:"";position:absolute;inset:-2px;border:2px solid var(--green);}
.selected::after {content:"";position:absolute;right:-3px;bottom:-3px;width:4px;height:4px;background:var(--green);outline:1px solid #fff;}
.actions {display:flex;flex-direction:column;gap:3px;}
.act {
  flex-direction:column;
  width:37px;
  height:37px;
  border:1px solid #dcdfe2;
  border-radius:4px;
  background:linear-gradient(135deg,#fff 20%,#dfe2e5);
  font-size:9px;
  line-height:11px;
  font-weight:500;
  color:#333;
}
.act.red {color:#c0393b;}

/* Scroll bars */
.vscroll {display:flex;flex-direction:column;width:15px;margin:3px 2px 0 3px;background:#dadada;}
.vscroll button,.hscroll button {width:15px;height:15px;background:#fff;border:1px solid #b0b0b0;}
.vscroll i {flex:1;margin-bottom:17px;background:#fff;border:1px solid #b0b0b0;}
.hscroll {display:flex;width:114px;height:15px;margin-right:20px;background:#dadada;}
.hscroll i {flex:1;margin-right:14px;background:#fff;border:1px solid #b0b0b0;}

/* Sheet tabs */
.sheet-tabs {display:flex;align-items:center;flex:none;height:29px;background:var(--frame);border-bottom:1px solid #c6c6c6;}
.tab-nav {display:flex;gap:22px;width:100px;padding-left:26px;}
.tabs {display:flex;align-self:stretch;flex:none;border-left:1px solid #999;color:#111;font-size:14px;}
.tabs button {height:28px;padding:0 12px 2px 10px;border:solid var(--frame);border-width:4px 1px 4px 3px;border-right-color:#999;background:var(--peach) padding-box;}
.tabs .blue {background-color:#bdd7ee;}
.tabs .on {height:26px;border:none;border-bottom:2px solid var(--green);border-right:1px solid #999;padding:0 13px;background:linear-gradient(#fff,#fdf3ee);color:var(--green);}
.ellipsis {margin:0 13px 0 9px;color:#0e5c2f;font-weight:700;}
.sheet-tabs .dots {margin:0 14px 0 auto;}

/* Status bar */
.status {display:flex;align-items:center;flex:none;height:21px;background:var(--ribbon);}
.macro {margin:0 auto 0 7px;}
.view {width:40px;height:21px;}
.view.on {background:#d0cecc;}
.zoom {display:flex;align-items:center;margin-left:5px;font-size:12px;}
.zoom span {width:60px;padding-left:13px;}
.zoom input {
  appearance:none;
  width:98px;
  height:12px;
  margin:0 7px;
  background:linear-gradient(#aaa,#aaa) center/100% 1px no-repeat,linear-gradient(#aaa,#aaa) center/1px 6px no-repeat;
}
.zoom input::-webkit-slider-thumb {appearance:none;width:5px;height:11px;background:#666;}
```

FILE: script.js
```javascript
const columns = [
  ['', 23, 'corner'], ['1', 4], ['', 3],
  ['3', 65], ['4', 67], ['5', 67], ['6', 67], ['7', 67], ['8', 67], ['9', 67],
  ['10', 67], ['11', 67], ['12', 67], ['13', 67], ['14', 67], ['15', 49], ['16', 48],
  ['', 3], ['18', 119, 'on'], ['19', 81], ['20', 68], ['21', 49]
];
const rowHeights = {1: 27, 2: 23, 3: 54, 8: 17, 15: 16};
const rowHeight = n => rowHeights[n] || 15;

const staff = {
  11: ['홍길동', '부서1', '과장', '2021-04-06', '', '', '', '', '010-111-11', '1,234,124', 'email', ''],
  12: ['유관순', '부서1', '대표', '2018-03-08', '', '', '', '', '', '', '', '']
};

document.getElementById('col-heads').innerHTML = columns
  .map(([name, width, cls]) => `<span class="${cls || ''}" style="width:${width}px">${name}</span>`)
  .join('');

let heads = '';
let staffRows = '';
let projectRows = '';
for (let n = 1; n <= 35; n++) {
  const height = `style="height:${rowHeight(n)}px"`;
  heads += `<div class="${n === 30 ? 'on' : ''}" ${height}>${n}</div>`;
  if (n < 11) continue;

  const person = staff[n] || Array(12).fill('');
  const link = staff[n] ? '<a href="#">보기</a>' : '';
  staffRows += `<tr ${height}>${person.map(v => `<td>${v}</td>`).join('')}<td>${link}</td></tr>`;
  projectRows += `<tr ${height}><td class="${n === 30 ? 'selected' : ''}"></td><td></td><td></td></tr>`;
}
document.getElementById('row-heads').innerHTML = heads;
document.getElementById('staff-rows').innerHTML = staffRows;
document.getElementById('project-rows').innerHTML = projectRows;
```
